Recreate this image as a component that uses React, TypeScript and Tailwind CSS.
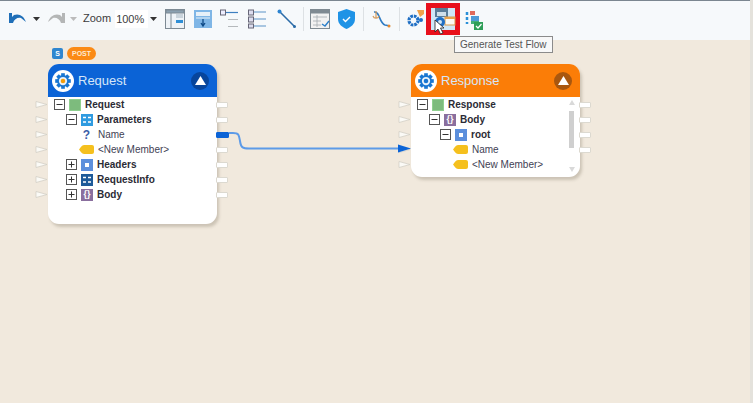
import type { ReactNode } from "react";

const font = "font-['Liberation_Sans',Arial,sans-serif]";

const Gear = ({ size = 22, dot = "#f59e0b" }: { size?: number; dot?: string }) => (
  <svg width={size} height={size} viewBox="0 0 24 24">
    <circle cx="12" cy="12" r="12" fill="#fff" />
    <g fill="#1976d2">
      {[0, 45, 90, 135, 180, 225, 270, 315].map((a) => (
        <rect key={a} x="10" y="3.500" width="4" height="3.500" transform={`rotate(${a} 12 12)`} />
      ))}
    </g>
    <circle cx="12" cy="12" r="6.500" fill="#1976d2" />
    <circle cx="12" cy="12" r="4.500" fill="#e8f1fa" />
    <circle cx="12" cy="12" r="2.500" fill={dot} />
  </svg>
);

const Toggle = ({ bg }: { bg: string }) => (
  <div className={`flex h-[18px] w-[18px] items-center justify-center rounded-full ${bg}`}>
    <svg width="11" height="9" viewBox="0 0 11 9">
      <path d="M5.500 0 L11 9 L0 9 Z" fill="#fff" />
    </svg>
  </div>
);

const Box = ({ open }: { open: boolean }) => (
  <svg width="11" height="11" viewBox="0 0 11 11" className="shrink-0">
    <rect x="0.5" y="0.5" width="10" height="10" fill="#fff" stroke="#555" />
    <path d={open ? "M2.5 5.5H8.5" : "M2.5 5.5H8.5M5.5 2.5V8.5"} stroke="#333" />
  </svg>
);

const Square = ({ color, children }: { color: string; children?: ReactNode }) => (
  <div className={`flex h-[12px] w-[12px] shrink-0 items-center justify-center ${color}`}>{children}</div>
);

const GreenIcon = () => (
  <div className="flex h-[12px] w-[12px] shrink-0 items-center justify-center border border-[#8fd08f] bg-[#7dbb7d]" />
);
const ParamsIcon = ({ color = "bg-[#2f9be0]" }: { color?: string }) => (
  <Square color={color}>
    <svg width="10" height="10" viewBox="0 0 10 10">
      <path d="M1 2.5H4M6 2.5H9M1 7H4M6 7H9" stroke="#fff" strokeWidth="1.6" />
    </svg>
  </Square>
);
const ObjIcon = () => (
  <Square color="bg-[#5c8fdc]">
    <div className="h-[4px] w-[4px] bg-white" />
  </Square>
);
const BodyIcon = () => (
  <div className="flex h-[12px] w-[12px] shrink-0 items-center justify-center bg-[#8a6f9e] text-[9px] leading-none font-bold text-white">
    {"{}"}
  </div>
);
const Tag = () => (
  <svg width="15" height="9" viewBox="0 0 15 9" className="shrink-0">
    <path d="M5 0H13a2 2 0 0 1 2 2V7a2 2 0 0 1-2 2H5C3 9 1 6 0 4.500C1 3 3 0 5 0Z" fill="#f5c01e" />
  </svg>
);
const Question = () => <span className="w-[15px] text-center text-[12px] leading-none font-bold text-[#3a5ea8]">?</span>;

type Row = { indent: number; box?: boolean; open?: boolean; icon: ReactNode; label: string; bold?: boolean };

const Tree = ({ rows }: { rows: Row[] }) => (
  <div className="flex flex-col">
    {rows.map((r) => (
      <div key={r.label} className="flex h-[15px] items-center gap-[4px]" style={{ paddingLeft: r.indent }}>
        {r.box && <Box open={!!r.open} />}
        {r.icon}
        <span
          className={`text-[10px] leading-none whitespace-nowrap ${
            r.bold ? "font-bold text-[#2b2b35]" : "text-[#3f3f55]"
          }`}
        >
          {r.label}
        </span>
      </div>
    ))}
  </div>
);

const InPort = ({ active }: { active?: boolean }) => (
  <svg width="13" height="7" viewBox="0 0 13 7">
    <path d="M1 0.5 L12 3.5 L1 6.5 Z" fill={active ? "#0b63d6" : "#fbfaf6"} stroke={active ? "#0b63d6" : "#cfccc2"} strokeWidth="0.7" />
  </svg>
);
const OutPort = ({ active }: { active?: boolean }) => (
  <div className={`h-[6px] rounded-[1px] border ${active ? "w-[13px] border-[#0b63d6] bg-[#0b63d6]" : "w-[12px] border-[#dcd9d0] bg-white"}`} />
);

const Ports = ({ count, side, activeAt }: { count: number; side: "in" | "out"; activeAt?: number }) => (
  <div className="flex flex-col">
    {Array.from({ length: count }).map((_, i) => (
      <div key={i} className="flex h-[15px] items-center">
        {side === "in" ? <InPort active={i === activeAt} /> : <OutPort active={i === activeAt} />}
      </div>
    ))}
  </div>
);

const Tool = ({ children, className = "" }: { children: ReactNode; className?: string }) => (
  <div className={`flex shrink-0 items-center justify-center ${className}`}>{children}</div>
);

const Sep = ({ className = "mx-[8px]" }: { className?: string }) => <div className={`h-[24px] w-px bg-[#dde1e4] ${className}`} />;
const Caret = ({ color = "#333" }: { color?: string }) => (
  <svg width="7" height="4" viewBox="0 0 7 4">
    <path d="M0 0H7L3.5 4Z" fill={color} />
  </svg>
);

const Toolbar = () => (
  <div className="flex h-[40px] items-center border-t border-[#7b8690] bg-[#f6f9fb] pb-[4px] pl-[8px]">
    <Tool className="w-[19px]">
      <svg width="19" height="11" viewBox="0 0 19 11">
        <path d="M1 0V10H5C6 6 10 4 13 5L18 9C16 3 11 0 6 2L4 4V0Z" fill="#1f6fb8" />
      </svg>
    </Tool>
    <div className="ml-[6px]"><Caret /></div>
    <Tool className="ml-[7px] w-[19px]">
      <svg width="19" height="11" viewBox="0 0 19 11">
        <path d="M18 0V10H14C13 6 9 4 6 5L1 9C3 3 8 0 13 2L15 4V0Z" fill="#b4b6b6" />
      </svg>
    </Tool>
    <div className="ml-[4px]"><Caret color="#bbb" /></div>
    <span className="ml-[6px] text-[11px] text-[#3c3c3c]">Zoom</span>
    <span className="ml-[4px] w-[33px] bg-white py-[2px] pl-[1px] text-[11px] leading-[14px] text-[#3c3c3c]">100%</span>
    <div className="ml-[2px]"><Caret /></div>
    <Tool className="ml-[8px]">
      <svg width="20" height="20" viewBox="0 0 20 20">
        <rect x="0.5" y="0.5" width="19" height="19" fill="#eef3f7" stroke="#7d8a94" />
        <path d="M1 1H19V4H1ZM6 4V19" stroke="#7d8a94" fill="#8aa0b0" />
        <rect x="11" y="5" width="7" height="4" fill="#c9d4dc" />
        <rect x="11" y="11" width="7" height="3" fill="#2f8fd6" />
      </svg>
    </Tool>
    <Tool className="ml-[9px]">
      <svg width="18" height="18" viewBox="0 0 18 18">
        <rect width="18" height="18" fill="#7fb6e6" />
        <rect x="2" y="2" width="14" height="4" fill="#e6f0f8" />
        <rect x="2" y="7.5" width="14" height="1" fill="#e6f0f8" />
        <path d="M9 9V15M7 13L9 16L11 13" stroke="#0e4a86" strokeWidth="1.3" fill="none" />
      </svg>
    </Tool>
    <Tool className="ml-[8px]">
      <svg width="20" height="20" viewBox="0 0 20 20">
        <rect x="0.5" y="1" width="5" height="5" fill="#eef" stroke="#667" />
        <path d="M6 3.5H18" stroke="#3d7fc0" strokeWidth="1.2" />
        <path d="M8 10.5H18M8 17.5H18" stroke="#b5b9bc" strokeWidth="1.2" />
      </svg>
    </Tool>
    <Tool className="ml-[8px]">
      <svg width="20" height="20" viewBox="0 0 20 20">
        <rect x="0.5" y="1" width="5" height="5" fill="#dde" stroke="#667" />
        <rect x="0.5" y="8" width="5" height="5" fill="#dde" stroke="#667" />
        <rect x="0.5" y="15" width="5" height="4" fill="#dde" stroke="#667" />
        <path d="M6 3H18M6 10H18M6 17H18" stroke="#5b93c8" strokeWidth="1.2" />
      </svg>
    </Tool>
    <Tool className="ml-[9px]">
      <svg width="20" height="20" viewBox="0 0 20 20">
        <path d="M2 2L18 18" stroke="#2b6ca8" strokeWidth="1.6" />
        <circle cx="2.5" cy="2.5" r="2" fill="#2b83d0" />
        <circle cx="17.5" cy="17.5" r="1.5" fill="#2b6ca8" />
      </svg>
    </Tool>
    <Sep className="mx-[6px]" />
    <Tool>
      <svg width="20" height="20" viewBox="0 0 20 20">
        <rect x="0.5" y="0.5" width="19" height="19" fill="#f2f2f2" stroke="#7f8a92" />
        <rect x="1" y="1" width="18" height="3.5" fill="#7f8a92" />
        <path d="M3 8H17M3 12H11M3 16H11M7 6V18" stroke="#a4abb0" strokeWidth="0.8" />
        <path d="M12 15L15 17L19 12" stroke="#2a7fca" strokeWidth="1.4" fill="none" />
      </svg>
    </Tool>
    <Tool className="ml-[8px]">
      <svg width="17" height="20" viewBox="0 0 17 20">
        <path d="M8.5 0L17 3V10C17 15 13 18 8.5 20C4 18 0 15 0 10V3Z" fill="#1f93e6" />
        <path d="M5 10L7.5 12.5L12 8" stroke="#fff" strokeWidth="1.4" fill="none" />
      </svg>
    </Tool>
    <Sep />
    <Tool>
      <svg width="19" height="18" viewBox="0 0 19 18">
        <path d="M2 2C8 1 7 13 13 15L18 16" stroke="#2f7cc4" strokeWidth="1.6" fill="none" />
        <path d="M4 1V8M1 6C2 9 6 9 7 6" stroke="#d39a5c" strokeWidth="1.2" fill="none" />
        <circle cx="17" cy="16" r="1.5" fill="#e88a2c" />
      </svg>
    </Tool>
    <Sep className="ml-[8px] mr-[6px]" />
    <Tool>
      <svg width="18" height="18" viewBox="0 0 18 18">
        <path d="M11 0A4 4 0 0 1 18 4L14 7Z" fill="#f0a24a" />
        <circle cx="7.5" cy="10.5" r="4.5" fill="none" stroke="#1f6fc4" strokeWidth="3.2" strokeDasharray="2.6 0.9" />
        <circle cx="15" cy="10" r="2" fill="#1f6fc4" />
      </svg>
    </Tool>
    <div className="ml-[2px] flex h-[32px] w-[34px] items-center justify-center border-[5px] border-[#e8101c] bg-[#cfe7f7]">
      <svg width="24" height="22" viewBox="0 0 24 22" className="overflow-visible">
        <rect x="4" y="0" width="13" height="9" fill="#5a7d98" />
        <rect x="6" y="4" width="9" height="4" fill="#cfe0ea" />
        <rect x="14" y="9" width="10" height="8" fill="#fbfbf5" stroke="#d89a4a" />
        <rect x="14" y="9" width="10" height="2" fill="#e8a44c" />
        <circle cx="9" cy="14" r="5" fill="#1f6fc4" />
        <circle cx="9" cy="14" r="2" fill="#cfe7f7" />
        <path d="M4 12V24L7 21L9.500 26L12 25L9.500 20L13 20Z" fill="#fff" stroke="#222" strokeWidth="0.8" />
      </svg>
    </div>
    <Tool className="ml-[4px]">
      <svg width="20" height="22" viewBox="0 0 20 22">
        <path d="M3 4V16" stroke="#2a90d8" strokeWidth="2.5" strokeDasharray="3 2" />
        <rect x="6" y="3" width="5" height="4" fill="#e06a5a" />
        <rect x="7" y="8" width="8" height="5" fill="#4d9ad6" />
        <rect x="7" y="13" width="8" height="3" fill="#3fae7a" />
        <rect x="10" y="14" width="9" height="8" fill="#2e9e58" />
        <path d="M12 18L14 20L17.5 16" stroke="#fff" strokeWidth="1.2" fill="none" />
      </svg>
    </Tool>
  </div>
);

const Node = ({
  title,
  headerBg,
  toggleBg,
  dot,
  height,
  children,
}: {
  title: string;
  headerBg: string;
  toggleBg: string;
  dot: string;
  height: string;
  children: ReactNode;
}) => (
  <div className={`flex w-[169px] flex-col overflow-hidden rounded-[11px] bg-white shadow-[2px_3px_3px_rgba(120,110,90,0.3)] ${height}`}>
    <div className={`flex h-[33px] shrink-0 items-center pr-[8px] pl-[4px] ${headerBg}`}>
      <Gear dot={dot} />
      <span className="ml-[4px] flex-1 text-[13px] font-medium text-[#d5e6f8]">{title}</span>
      <Toggle bg={toggleBg} />
    </div>
    {children}
  </div>
);

export default function App() {
  return (
    <div className={`flex h-[403px] w-[753px] flex-col overflow-hidden border-r-[3px] border-[#e4e2dc] bg-[#f1e9dd] ${font}`}>
      <Toolbar />
      <div className="relative flex-1">
        {/* diagram nodes */}
        <div className="absolute top-[7px] left-[52px] flex items-center gap-[4px]">
          <div className="flex h-[11px] w-[11px] items-center justify-center rounded-[2px] bg-[#2f86cf] text-[7px] leading-none font-bold text-white">S</div>
          <div className="flex h-[13px] w-[29px] items-center justify-center rounded-full bg-[#fb8a14] text-[7px] leading-none font-bold text-[#fde9d0]">POST</div>
        </div>

        <div className="absolute top-[24px] left-[48px]">
          <Node title="Request" headerBg="bg-[#0b63d6]" toggleBg="bg-[#07459c]" dot="#f59e0b" height="h-[160px]">
            <Tree
              rows={[
                { indent: 6, box: true, open: true, icon: <GreenIcon />, label: "Request", bold: true },
                { indent: 18, box: true, open: true, icon: <ParamsIcon />, label: "Parameters", bold: true },
                { indent: 31, icon: <Question />, label: "Name" },
                { indent: 31, icon: <Tag />, label: "<New Member>" },
                { indent: 18, box: true, icon: <ObjIcon />, label: "Headers", bold: true },
                { indent: 18, box: true, icon: <ParamsIcon color="bg-[#1d5a99]" />, label: "RequestInfo", bold: true },
                { indent: 18, box: true, icon: <BodyIcon />, label: "Body", bold: true },
              ]}
            />
          </Node>
          <div className="absolute top-[33px] left-[-13px]"><Ports count={7} side="in" /></div>
          <div className="absolute top-[33px] left-[168px]"><Ports count={7} side="out" activeAt={2} /></div>
        </div>

        <div className="absolute top-[24px] left-[411px]">
          <Node title="Response" headerBg="bg-[#fb7d07]" toggleBg="bg-[#a9570f]" dot="#1976d2" height="h-[113px]">
            <div className="relative">
              <Tree
                rows={[
                  { indent: 6, box: true, open: true, icon: <GreenIcon />, label: "Response", bold: true },
                  { indent: 18, box: true, open: true, icon: <BodyIcon />, label: "Body", bold: true },
                  { indent: 29, box: true, open: true, icon: <ObjIcon />, label: "root", bold: true },
                  { indent: 42, icon: <Tag />, label: "Name" },
                  { indent: 42, icon: <Tag />, label: "<New Member>" },
                ]}
              />
              <div className="absolute top-[14px] right-[6px] h-[37px] w-[5px] bg-[#cfcfcf]" />
              <div className="absolute top-[3px] right-[5px] h-0 w-0 border-x-[3px] border-b-[5px] border-x-transparent border-b-[#d9d9d9]" />
              <div className="absolute top-[70px] right-[5px] h-0 w-0 border-x-[3px] border-t-[5px] border-x-transparent border-t-[#d9d9d9]" />
            </div>
          </Node>
          <div className="absolute top-[33px] left-[-13px]"><Ports count={5} side="in" /></div>
          <div className="absolute top-[33px] left-[168px]"><Ports count={4} side="out" /></div>
        </div>

        {/* link between Name ports */}
        <svg className="absolute top-[85px] left-[225px]" width="190" height="30" viewBox="0 0 190 30">
          <path d="M4 8H8C14 8 14 10 15 16C16 23 18 23.500 24 23.500H176" stroke="#5d9be8" strokeWidth="2" fill="none" />
          <path d="M173 19.500L186 23.500L173 27.500Z" fill="#0b63d6" />
        </svg>

        {/* tooltip */}
        <div className="absolute top-[-4px] left-[454px] flex h-[17px] items-center border border-[#8b8b8b] bg-[#f8f8f8] px-[5px] text-[10px] whitespace-nowrap text-[#555]">
          Generate Test Flow
        </div>
      </div>
    </div>
  );
}
